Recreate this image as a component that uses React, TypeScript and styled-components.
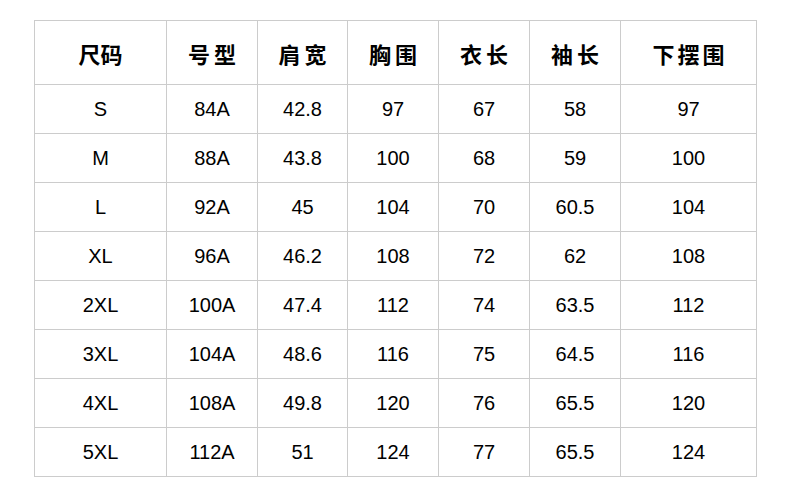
import React from 'react';
import styled, { createGlobalStyle } from 'styled-components';

const GlobalStyle = createGlobalStyle`
  html, body {
    margin: 0;
    padding: 0;
    background: #fff;
  }
  body {
    font-family: "Liberation Sans", "Noto Sans CJK SC", sans-serif;
    color: #000;
  }
`;

const Page = styled.div`
  width: 790px;
  height: 477px;
  padding: 20px 0 0 34px;
  box-sizing: border-box;
  background: #fff;
`;

const SizeTable = styled.table`
  border-collapse: collapse;
  table-layout: fixed;
  width: 722px;
`;

const HeadCell = styled.th<{ $spacing: number }>`
  height: 64px;
  padding: 0 0 0 ${(p) => p.$spacing}px;
  border: 1px solid #cccccc;
  font-family: "Noto Sans CJK SC", "Liberation Sans", sans-serif;
  font-size: 22px;
  font-weight: 700;
  letter-spacing: ${(p) => p.$spacing}px;
  text-align: center;
  vertical-align: middle;
  box-sizing: border-box;
`;

const Cell = styled.td`
  height: 48px;
  padding: 0;
  border: 1px solid #cccccc;
  font-family: "Liberation Sans", sans-serif;
  font-size: 20px;
  text-align: center;
  vertical-align: middle;
`;

const columns = [
  { label: '尺码', width: 132, spacing: 0 },
  { label: '号型', width: 91, spacing: 4 },
  { label: '肩宽', width: 90, spacing: 4 },
  { label: '胸围', width: 91, spacing: 4 },
  { label: '衣长', width: 91, spacing: 4 },
  { label: '袖长', width: 91, spacing: 4 },
  { label: '下摆围', width: 136, spacing: 3 },
];

const rows = [
  ['S', '84A', '42.8', '97', '67', '58', '97'],
  ['M', '88A', '43.8', '100', '68', '59', '100'],
  ['L', '92A', '45', '104', '70', '60.5', '104'],
  ['XL', '96A', '46.2', '108', '72', '62', '108'],
  ['2XL', '100A', '47.4', '112', '74', '63.5', '112'],
  ['3XL', '104A', '48.6', '116', '75', '64.5', '116'],
  ['4XL', '108A', '49.8', '120', '76', '65.5', '120'],
  ['5XL', '112A', '51', '124', '77', '65.5', '124'],
];

const App: React.FC = () => {
  return (
    <>
      <GlobalStyle />
      <Page>
        <SizeTable>
          <colgroup>
            {columns.map((c) => (
              <col key={c.label} style={{ width: c.width }} />
            ))}
          </colgroup>
          <thead>
            <tr>
              {columns.map((c) => (
                <HeadCell key={c.label} $spacing={c.spacing}>
                  {c.label}
                </HeadCell>
              ))}
            </tr>
          </thead>
          <tbody>
            {rows.map((r) => (
              <tr key={r[0]}>
                {r.map((v, i) => (
                  <Cell key={i}>{v}</Cell>
                ))}
              </tr>
            ))}
          </tbody>
        </SizeTable>
      </Page>
    </>
  );
};

export default App;
